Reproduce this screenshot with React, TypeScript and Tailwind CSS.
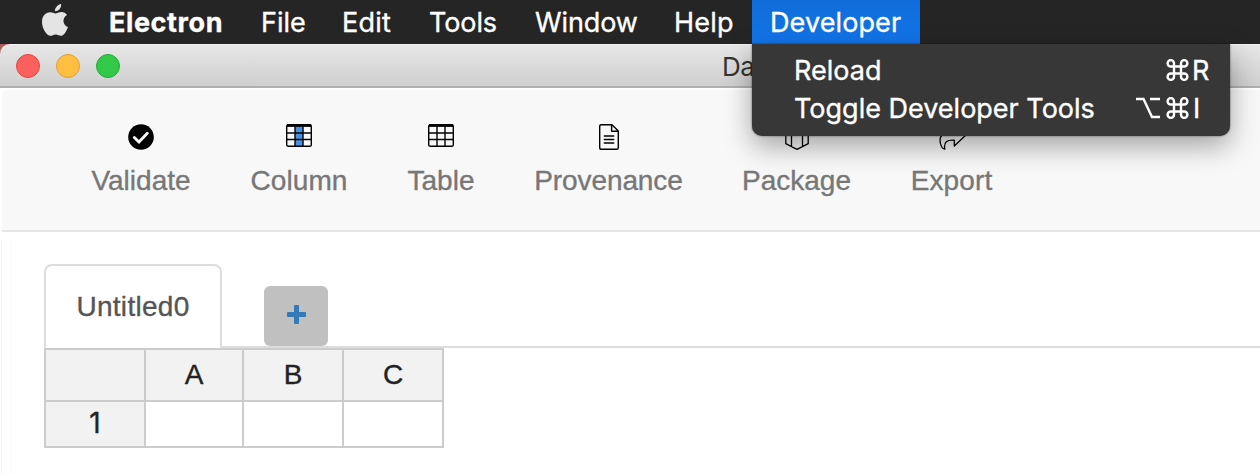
import React from "react";

const menu = [
  { t: "Electron", c: "w-[152px] font-bold tracking-[0.6px]" },
  { t: "File", c: "w-[81px]" },
  { t: "Edit", c: "w-[87px] tracking-[0.2px]" },
  { t: "Tools", c: "w-[106px] tracking-[-0.1px]" },
  { t: "Window", c: "w-[139px] tracking-[-0.1px]" },
  { t: "Help", c: "w-[78px] tracking-[0.2px]" },
];

function Grid({ accent }: { accent?: boolean }) {
  return (
    <svg width="26" height="23" viewBox="0 0 26 23" fill="none" stroke="#000">
      {accent && <rect x="9" y="2" width="8" height="20" fill="#4a90e2" stroke="none" />}
      <rect x="0.7" y="0.7" width="24.6" height="21.6" rx="1.6" strokeWidth="1.4" />
      <path d="M1 1.5H25" strokeWidth="2.8" />
      <path d="M1 9H25M1 15.5H25M9 2V22M17 2V22" strokeWidth="1.4" />
    </svg>
  );
}

function Check() {
  return (
    <svg width="26" height="26" viewBox="0 0 26 26">
      <circle cx="13" cy="13" r="12.8" />
      <path d="M6.3 13.5L11 18L19.3 9.3" stroke="#f8f8f8" strokeWidth="2.9" fill="none" strokeLinecap="round" />
    </svg>
  );
}

function Doc() {
  return (
    <svg width="20" height="26" viewBox="0 0 20 26" fill="none" stroke="#000" strokeWidth="1.4" strokeLinejoin="round">
      <path d="M2.2 .7H13L19.3 7V23.8Q19.3 25.3 17.8 25.3H2.2Q.7 25.3 .7 23.8V2.2Q.7 .7 2.2 .7ZM12.6 .9V7.3H19" />
      <path d="M5.3 12H14.7M5.3 15.5H14.7M5.3 19H14.7" strokeLinecap="round" />
    </svg>
  );
}

function Package() {
  return (
    <svg width="24" height="26" viewBox="0 0 24 26" fill="none" stroke="#000" strokeWidth="1.3" strokeLinejoin="round">
      <path d="M12 .7L23.2 6V19.7L12 25.3L.8 19.7V6ZM.8 6L12 11L23.2 6M6.5 8V22.5M17.5 8V22.5" />
    </svg>
  );
}

function Share() {
  return (
    <svg width="28" height="26" viewBox="0 0 28 26" fill="none" stroke="#000" strokeWidth="1.3" strokeLinejoin="round">
      <path d="M17 3L27.4 11.5L16.3 22V16.2C9 15.8 5.5 17.5 6.8 25.2C3.5 25 1 18 2.6 13C4.5 9 10 8.3 17 8.3Z" />
    </svg>
  );
}

const tools = [
  { t: "Validate", i: <Check />, c: "w-[98px] mr-[60px]" },
  { t: "Column", i: <Grid accent />, c: "w-[98px] mr-[60px] tracking-[0.1px]" },
  { t: "Table", i: <Grid />, c: "w-[66px] mr-[60px]" },
  { t: "Provenance", i: <Doc />, c: "w-[149px] mr-[59px] tracking-[-0.1px]" },
  { t: "Package", i: <Package />, c: "w-[109px] mr-[59px]" },
  { t: "Export", i: <Share />, c: "w-[83px] tracking-[0.1px]" },
];

function Command() {
  return (
    <svg width="23" height="22" viewBox="0 0 23 22" fill="none" stroke="#fff" strokeWidth="2.4">
      <path d="M8 7.5H15V14.5H8ZM8 7.5H4.8A3.2 3.2 0 1 1 8 4.3ZM15 7.5V4.3A3.2 3.2 0 1 1 18.2 7.5ZM15 14.5H18.2A3.2 3.2 0 1 1 15 17.7ZM8 14.5V17.7A3.2 3.2 0 1 1 4.8 14.5Z" />
    </svg>
  );
}

export default function App() {
  return (
    <div className="relative flex h-[474px] w-[1260px] flex-col overflow-hidden bg-white font-['Liberation_Sans',sans-serif] text-[28px] leading-none">
      <nav className="flex h-11 shrink-0 bg-[#252525] font-['Inter',sans-serif] text-[27px] leading-[46px] text-white [-webkit-text-stroke:0.35px]">
        <svg className="mt-1 ml-[42px] mr-[41px] h-8 w-[26px]" viewBox="0 0 26 32" fill="#e4e4e4">
          <path d="M19.2 0C19.4 4.2 16.5 7.2 13 7.2C12.7 3.6 16 .4 19.2 0Z" />
          <path d="M13.5 9.4C15 9.4 17 7.9 19.5 8C21.8 8.1 23.8 9.1 25 10.9C19.7 14 20.6 21 26 23C25 26 22.3 31.5 19.3 31.7C17.2 31.8 16.3 30.4 13.8 30.4C11.3 30.4 10.3 31.7 8.4 31.8C5 31.8 0 25 0 18C0 11.5 4 8.3 7.8 8.2C10.2 8.2 12.2 9.4 13.5 9.4Z" />
        </svg>
        {menu.map((m) => (
          <span key={m.t} className={`${m.c} whitespace-nowrap`}>{m.t}</span>
        ))}
        <span className="h-11 w-[168px] bg-linear-to-b from-[#106cd8] to-[#1275ec] pl-[18px] tracking-[0.1px]">Developer</span>
      </nav>

      <div className="h-11 shrink-0 bg-[#a95d60]">
        <header className="flex h-11 items-center rounded-tl-[10px] border-t border-b-2 border-t-[#f2f2f2] border-b-[#b0b0b0] bg-linear-to-b from-[#e7e7e7] to-[#cfcfcf] pl-4">
          <i className="mr-4 size-6 rounded-full border border-[#e24640] bg-[#fc605c]" />
          <i className="mr-4 size-6 rounded-full border border-[#dfa031] bg-[#fdbe41]" />
          <i className="size-6 rounded-full border border-[#24aa38] bg-[#34c84a]" />
          <span className="ml-[602px] pt-[2px] font-['Inter',sans-serif] text-[26px] tracking-[-0.5px] text-[#333]">Da</span>
        </header>
      </div>

      <section className="mt-[2px] ml-[2px] flex h-[142px] shrink-0 rounded-tl-md border-b-2 border-[#e5e5e5] bg-[#f8f8f8] pt-[34px] pl-[90px] text-[#777] [-webkit-text-stroke:0.35px]">
        {tools.map((t) => (
          <div key={t.t} className={`${t.c} flex shrink-0 flex-col items-center whitespace-nowrap`}>
            <div className="h-[43px]">{t.i}</div>
            <span>{t.t}</span>
          </div>
        ))}
      </section>

      <main className="flex-1 pt-2 pl-[1px]">
        <div className="h-full border-l border-[#f5f5f5] pl-[9px]">
          <div className="h-full border-l border-[#fafafa] pt-6 pl-8">
            <div className="flex h-[84px] items-end">
              <div className="flex h-[84px] w-[178px] justify-center rounded-t-lg border-2 border-b-0 border-[#ddd] pt-[27px] tracking-[0.3px] text-[#555] [-webkit-text-stroke:0.35px]">
                Untitled0
              </div>
              <div className="flex h-[84px] flex-1 items-end border-b-2 border-[#ddd] pl-[42px]">
                <button className="flex h-[60px] w-16 items-center justify-center rounded-md bg-[#c0c0c0] pb-[3px]">
                  <svg width="19" height="19" viewBox="0 0 19 19" fill="#337ab7">
                    <path d="M8 0h3q1 0 1 1v6h6q1 0 1 1v3q0 1-1 1h-6v6q0 1-1 1H8q-1 0-1-1v-6H1q-1 0-1-1V8q0-1 1-1h6V1q0-1 1-1z" />
                  </svg>
                </button>
              </div>
            </div>
            <div className="grid w-[400px] grid-cols-[102px_98px_100px_100px] grid-rows-[54px_46px] text-center text-[#222] [-webkit-text-stroke:0.35px]">
              {["", "A", "B", "C", "1", "", "", ""].map((v, i) => (
                <div
                  key={i}
                  className={`border-r-2 border-b-2 border-[#ccc] ${i < 4 ? "border-t-2 pt-[11px]" : "pt-[7px] font-['Inter',sans-serif]"} ${i % 4 === 0 ? "border-l-2" : ""} ${i < 5 ? "bg-[#f2f2f2]" : ""}`}
                >
                  {v}
                </div>
              ))}
            </div>
          </div>
        </div>
      </main>

      <div className="absolute top-11 left-[752px] h-[92px] w-[478px] rounded-b-[10px] bg-[#373737] pt-[7px] pl-[42px] font-['Inter',sans-serif] text-[27px] leading-[38px] text-white shadow-[0_10px_28px_rgba(0,0,0,0.35),0_0_2px_rgba(0,0,0,0.6)] [-webkit-text-stroke:0.35px]">
        <div className="flex h-[38px] items-center">
          <span className="w-[372px] pt-[2px]">Reload</span>
          <Command />
          <span className="ml-[3px] pt-[2px]">R</span>
        </div>
        <div className="flex h-[38px] items-center">
          <span className="w-[342px] pt-[2px] whitespace-nowrap">Toggle Developer Tools</span>
          <svg className="mr-[6px]" width="24" height="22" viewBox="0 0 24 22" fill="none" stroke="#fff" strokeWidth="2.4">
            <path d="M0 2H7.5L16 20H24M14 2H24" />
          </svg>
          <Command />
          <span className="ml-[4px] pt-[2px]">I</span>
        </div>
      </div>
    </div>
  );
}
